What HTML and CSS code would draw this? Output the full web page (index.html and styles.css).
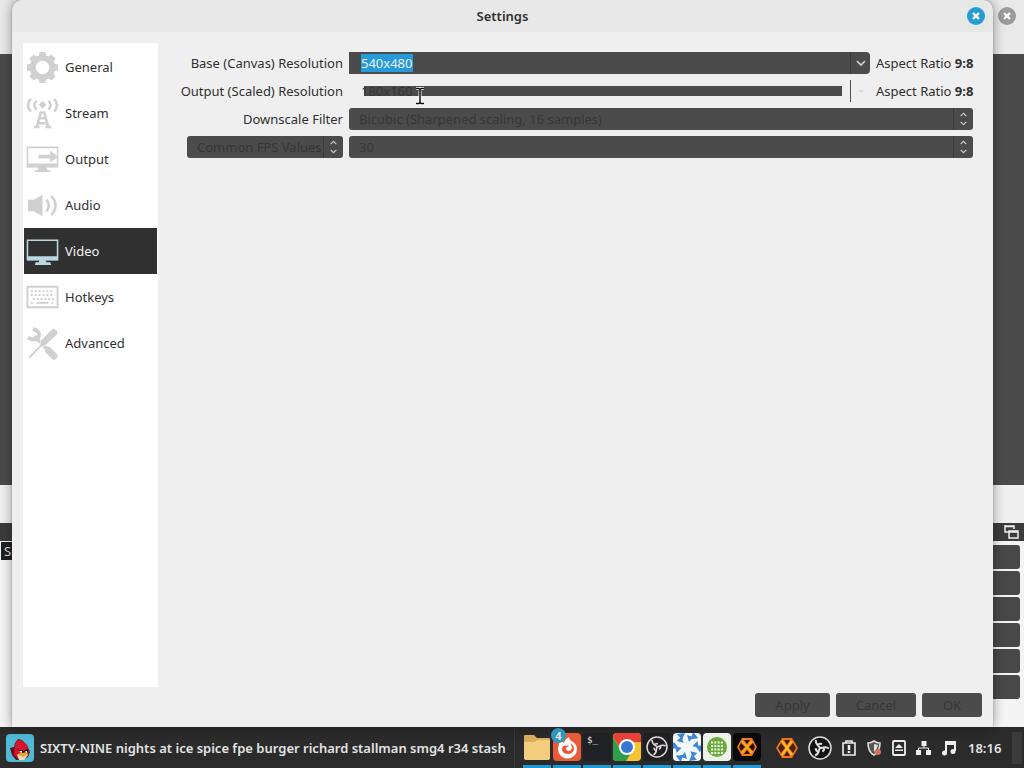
FILE: index.html
```html
<!DOCTYPE html>
<html lang="en">
<head>
<meta charset="utf-8">
<meta name="viewport" content="width=device-width, initial-scale=1">
<title>Settings</title>
<link rel="stylesheet" href="styles.css">
</head>
<body>
<div class="desktop">
  <div class="workspace">
    <div class="app">
      <div class="app-title">
        <button class="close close-idle" aria-label="Close main window"><svg viewBox="0 0 18 18"><path d="M6 6l6 6M12 6l-6 6"/></svg></button>
      </div>
      <div class="app-preview"></div>
      <div class="app-toolbar"></div>
      <div class="dock-title">
        <svg class="float-icon" viewBox="0 0 16 16"><path d="M1 2h9v3M1 1v7h4M5 7h9v7H5z M1 2.5h9M5 8h9"/></svg>
      </div>
      <div class="docks">
        <span class="scene">Scene</span>
        <div class="controls">
          <button aria-label="Start streaming"></button>
          <button aria-label="Start recording"></button>
          <button aria-label="Virtual camera"></button>
          <button aria-label="Studio mode"></button>
          <button aria-label="Settings"></button>
          <button aria-label="Exit"></button>
        </div>
      </div>
    </div>

    <section class="dialog" role="dialog" aria-labelledby="dialog-title">
      <header class="titlebar">
        <h1 id="dialog-title">Settings</h1>
        <button class="close" aria-label="Close"><svg viewBox="0 0 18 18"><path d="M6 6l6 6M12 6l-6 6"/></svg></button>
      </header>
      <div class="dialog-body">
        <nav class="sidebar">
          <a href="#general"><svg viewBox="0 0 34 34"><g fill="#d0d0d0"><path fill-rule="evenodd" d="M17 4a13 13 0 1 0 0 26a13 13 0 1 0 0-26zM17 10a7 7 0 1 1 0 14a7 7 0 1 1 0-14z"/><path id="tooth" d="M13 7l1-6h6l1 6zM13 27l1 6h6l1-6z"/><use href="#tooth" transform="rotate(45 17 17)"/><use href="#tooth" transform="rotate(90 17 17)"/><use href="#tooth" transform="rotate(135 17 17)"/></g></svg>General</a>
          <a href="#stream"><svg viewBox="0 0 34 34"><g fill="none" stroke="#d0d0d0" stroke-width="2.600"><path d="M5 2q-6 6 0 13M29 2q6 6 0 13M11 4q-5 4 0 9M23 4q5 4 0 9"/><path d="M15.500 15L11 31M18.500 15L23 31M14 16h6M13 22h8M11 27h12M8 31h6M20 31h6"/></g><path d="M17 4l4 4-4 4-4-4z" fill="#d0d0d0"/></svg>Stream</a>
          <a href="#output"><svg viewBox="0 0 34 34"><path d="M1.500 4.500h31v20h-31z" fill="none" stroke="#d0d0d0" stroke-width="1.600"/><path d="M1 21h32v4H1zM13 25h8l1 3h3v2H9v-2h3zM13 12h12V8l8 6-8 6v-4H13z" fill="#d0d0d0"/></svg>Output</a>
          <a href="#audio"><svg viewBox="0 0 34 34"><path d="M2 11h6L17 6v22l-9-5H2z" fill="#d0d0d0"/><path d="M21 11q5 6 0 12M26 7q9 10 0 20" fill="none" stroke="#d0d0d0" stroke-width="2.600"/></svg>Audio</a>
          <a href="#video" class="current" aria-current="page"><svg viewBox="0 0 34 34"><path d="M1.500 5.500h31v20h-31z" fill="none" stroke="#b9d7df" stroke-width="1.600"/><path d="M1 22h32v4H1zM14 26h6l1 2h4l1 3H9l1-3h3z" fill="#b9d7df"/></svg>Video</a>
          <a href="#hotkeys"><svg viewBox="0 0 34 34"><path d="M1.500 6h31v21h-31z" fill="none" stroke="#d0d0d0" stroke-width="2"/><path d="M5 10.500h24M5 14.500h24M7 18.500h22M5 22.500h3M26 22.500h3" fill="none" stroke="#d0d0d0" stroke-width="2" stroke-dasharray="2 2"/><path d="M11 22.500h12" stroke="#d0d0d0" stroke-width="2"/></svg>Hotkeys</a>
          <a href="#advanced"><svg viewBox="0 0 34 34"><g fill="none" stroke="#d0d0d0" stroke-linecap="round"><path d="M23 24l6 6" stroke-width="7"/><path d="M10 11l10 10" stroke-width="4"/><path d="M7 2q8 2 6 8-4 5-11 1" stroke-width="4" stroke-linecap="butt"/></g><path d="M28 1l5 3q0 3-2 5L20 19l-5 2L5 32l-3 1 1-3 11-11 1-5L26 3z" fill="#d0d0d0" stroke="#fff" stroke-width=".8"/></svg>Advanced</a>
        </nav>
        <main class="content">
          <form class="form">
            <label for="base">Base (Canvas) Resolution</label>
            <div class="with-ratio">
              <div class="combo">
                <span class="field"><input id="base" class="selected" value="540x480" size="6"></span>
                <button type="button" class="drop" aria-label="Show base resolutions"><svg viewBox="0 0 10 10"><path d="M1 3l4 4 4-4"/></svg></button>
              </div>
              <span>Aspect Ratio <b>9:8</b></span>
            </div>

            <label for="scaled">Output (Scaled) Resolution</label>
            <div class="with-ratio">
              <div class="combo combo-flat">
                <span class="field"><input id="scaled" value="180x160"></span>
                <button type="button" class="drop" aria-label="Show output resolutions"><svg viewBox="0 0 10 10"><path d="M2 4h6L5 7z"/></svg></button>
              </div>
              <span>Aspect Ratio <b>9:8</b></span>
            </div>

            <label for="filter">Downscale Filter</label>
            <div class="picker">
              <select id="filter"><option>Bicubic (Sharpened scaling, 16 samples)</option></select>
              <svg viewBox="0 0 20 22"><path d="M7 8l3-3 3 3M7 14l3 3 3-3"/></svg>
            </div>

            <div class="picker fps-type">
              <select id="fps-type" aria-label="FPS type"><option>Common FPS Values</option></select>
              <svg viewBox="0 0 20 22"><path d="M7 8l3-3 3 3M7 14l3 3 3-3"/></svg>
            </div>
            <div class="picker">
              <select aria-label="FPS value"><option>30</option></select>
              <svg viewBox="0 0 20 22"><path d="M7 8l3-3 3 3M7 14l3 3 3-3"/></svg>
            </div>
          </form>
          <footer class="actions">
            <button class="apply">Apply</button>
            <button class="cancel">Cancel</button>
            <button class="ok">OK</button>
          </footer>
        </main>
      </div>
    </section>
    <svg class="pointer" viewBox="0 0 10 18"><path d="M1 1.500h3l1 1 1-1h3M5 2v14M1 16.500h3l1-1 1 1h3" stroke="#fff" stroke-width="3"/><path d="M1 1.500h3l1 1 1-1h3M5 2v14M1 16.500h3l1-1 1 1h3" stroke="#111" stroke-width="1.500"/></svg>
  </div>

  <footer class="taskbar">
    <button class="menu" aria-label="Menu"><svg viewBox="0 0 30 30"><rect x="1" y="1" width="28" height="28" rx="4" fill="#50b9d5"/><path d="M5 15l4-1 1-4 3-4 4 1 5 5 3 7-2 5-6 3H11l-4-5z" fill="#65131a"/><path d="M10 12q2-6 6-5l6 5 2 7-4 6-6 1-5-4z" fill="#d5142c"/><path d="M12 22q5-4 11 0l-4 5h-5z" fill="#ead9bd"/><path d="M16 18l8 3-6 3-4-2z" fill="#f2a51d"/><path d="M12 16l6 2 5-2v3l-6 1z" fill="#111"/><path d="M14 18h3v2zM19 19l3-1v2z" fill="#fff"/></svg></button>
    <span class="now">SIXTY-NINE nights at ice spice fpe burger richard stallman smg4 r34 stash</span>
    <div class="tasks">
      <button aria-label="Files"><svg viewBox="0 0 28 28"><path d="M1 3q0-1 1-1h9l3 3h12q1 0 1 1v20H1z" fill="#d9ad59"/><path d="M1 9h10l3-2h13v18q0 2-2 2H3q-2 0-2-2z" fill="#f3cc7d"/></svg></button>
      <button aria-label="Firefox, 4 windows"><svg viewBox="0 0 28 28"><rect width="28" height="28" rx="4" fill="#e95b38"/><path d="M8 7l3 3q1-4 5-6 0 3 4 5 4 3 4 7a9.500 9.500 0 0 1-19 0q0-5 3-9z" fill="#fff"/><path d="M10 13q2-1 3 0l3-1q-1 2-3 3 0 3 3 3 3-1 3-4l-2-4q4 2 4 6-1 5-6 5-5 0-6-4 0-2 1-4z" fill="#e95b38"/></svg><span class="badge">4</span></button>
      <button aria-label="Terminal"><svg viewBox="0 0 28 28"><rect width="28" height="28" rx="3" fill="#202124"/><text x="4" y="10" class="prompt">$_</text></svg></button>
      <button aria-label="Chrome"><svg viewBox="0 0 28 28"><rect width="28" height="28" rx="4" fill="#f5c431"/><path d="M0 4q0-4 4-4h20q4 0 4 4v5H14L8 17 0 4z" fill="#e74236"/><path d="M0 4l8 14 10 2-5 8H4q-4 0-4-4z" fill="#2e9e4d"/><circle cx="14" cy="14" r="8" fill="#fff"/><circle cx="14" cy="14" r="6" fill="#3678d2"/></svg></button>
      <button aria-label="OBS Studio"><svg viewBox="0 0 28 28"><rect width="28" height="28" rx="4" fill="#211f22"/><g fill="none" stroke="#ddd" stroke-width="1.500"><circle cx="14" cy="14" r="10"/><path id="blade" d="M14 14c-1-2-5-2-5-7M14 14"/><use href="#blade" transform="rotate(120 14 14)"/><use href="#blade" transform="rotate(240 14 14)"/><path id="curl" d="M11 12q1-2 4-1"/><use href="#curl" transform="rotate(120 14 14)"/><use href="#curl" transform="rotate(240 14 14)"/></g></svg></button>
      <button aria-label="Video editor"><svg viewBox="0 0 28 28"><rect width="28" height="28" rx="4" fill="#f5f9ff"/><g fill="#3e87d7"><path id="fin" d="M4 1l8-1-3 7zM14 2l6 2-4 5z"/><use href="#fin" transform="rotate(60 14 14)"/><use href="#fin" transform="rotate(120 14 14)"/><use href="#fin" transform="rotate(180 14 14)"/><use href="#fin" transform="rotate(240 14 14)"/><use href="#fin" transform="rotate(300 14 14)"/></g></svg></button>
      <button aria-label="Grid app"><svg viewBox="0 0 28 28"><rect width="28" height="28" rx="4" fill="#eff2ea"/><circle cx="14" cy="14" r="10" fill="#68aa3b"/><path d="M8 9.500h12M8 13h12M8 16.500h12M8 20h12" stroke="#f5fff0" stroke-width="2" stroke-dasharray="2 1.300"/></svg></button>
      <button aria-label="Hex app"><svg viewBox="0 0 28 28"><rect width="28" height="28" rx="4" fill="#090909"/><path d="M9 5h10l5 9-5 9H9l-5-9z" fill="#ef791e"/><path d="M11 7h6l-3 4zM11 21h6l-3-4zM6 14l2-4 4 4-4 4zM22 14l-2-4-4 4 4 4z" fill="#2a1207"/><path d="M9 8l10 12M19 8L9 20" stroke="#f7b520" stroke-width="1.600"/></svg></button>
    </div>
    <div class="tray">
      <svg class="big" viewBox="0 0 24 24"><path d="M7 2h10l6 10-6 10H7L1 12z" fill="#ed7420"/><path d="M9 4h6l-3 5zM9 20h6l-3-5zM3 12l3-5 4 5-4 5zM21 12l-3-5-4 5 4 5z" fill="#4a2108"/><path d="M7 5l10 14M17 5L7 19" stroke="#ffc12b" stroke-width="2"/></svg>
      <svg class="big" viewBox="0 0 24 24"><circle cx="12" cy="12" r="11" fill="#111" stroke="#ddd" stroke-width="1.500"/><g fill="none" stroke="#ddd" stroke-width="2"><path id="vane" d="M12 12c-1-3-5-3-4-8M9 9q2-2 5-1"/><use href="#vane" transform="rotate(120 12 12)"/><use href="#vane" transform="rotate(240 12 12)"/></g></svg>
      <svg viewBox="0 0 16 16"><path d="M2 3h12v12H2zM5 3V1h6v2" fill="none" stroke="#eee" stroke-width="1.600"/><path d="M8 5v5M8 11v2" stroke="#eee" stroke-width="2.500"/></svg>
      <svg viewBox="0 0 16 16"><path d="M8 1q3 2 6 2 0 9-6 12Q2 12 2 3q3 0 6-2z" fill="#555" stroke="#ddd" stroke-width="1.600"/><path d="M8 4l4 1q-1 5-4 7z" fill="#ddd"/><circle cx="12" cy="12" r="3" fill="#dc704c"/></svg>
      <svg viewBox="0 0 16 16"><rect x="2" y="1" width="12" height="14" rx="1" fill="none" stroke="#eee" stroke-width="1.800"/><path d="M8 4l4 4H4zM4 9.500h8V11H4z" fill="#eee"/></svg>
      <svg viewBox="0 0 16 16"><path d="M5.500 1h5v5h-5zM0 10h5v5H0zM10 10h5v5h-5z" fill="#eee"/><path d="M8 5v3M2.500 11V8h10v3" fill="none" stroke="#eee"/></svg>
      <svg viewBox="0 0 16 16"><path d="M5 13V2h9v9M5 4h9" fill="none" stroke="#eee" stroke-width="2"/><circle cx="3.500" cy="13" r="2.500" fill="#eee"/><circle cx="12" cy="11.500" r="2.500" fill="#eee"/></svg>
      <time>18:16</time>
      <button class="show-desktop" aria-label="Show desktop"></button>
    </div>
  </footer>
</div>
</body>
</html>
```

FILE: styles.css
```css
* { box-sizing: border-box; }

body {
  margin: 0;
  font: 13px/18px "Noto Sans", "Open Sans", sans-serif;
  color: #303030;
}

button, input, select { font: inherit; color: inherit; border: 0; padding: 0; margin: 0; }
svg { display: block; flex: none; }

.desktop { display: flex; flex-direction: column; height: 100vh; overflow: hidden; }
.workspace { position: relative; flex: 1; min-height: 0; }

.app { display: flex; flex-direction: column; height: 100%; background: #efefef; }
.app-title { display: flex; justify-content: flex-end; height: 54px; padding: 7px 8px; background: #e9e9e9; }
.app-preview { flex: 1; background: #4b4b4b; }
.app-toolbar { height: 38px; }
.dock-title { display: flex; justify-content: flex-end; height: 18px; padding: 1px 4px; background: #3c3c3c; }
.float-icon { width: 16px; height: 16px; fill: none; stroke: #eee; stroke-width: 1.5; }
.docks { display: flex; justify-content: space-between; height: 186px; background: #f4f4f4; }
.scene { height: 18px; margin: 1px; padding: 0 3px; background: #202020; color: #ddd; }
.controls { display: flex; flex-direction: column; gap: 2px; width: 120px; padding: 4px 4px 0 0; }
.controls button { height: 24px; border-radius: 3px; background: #484848; }

.close { width: 18px; height: 18px; border-radius: 50%; background: #269bd9; }
.close svg { width: 18px; height: 18px; stroke: #fff; stroke-width: 2.4; }
.close-idle { background: #9b9b9b; }

.dialog {
  position: absolute;
  inset: 0 31px 0 12px;
  display: flex;
  flex-direction: column;
  border-radius: 10px 10px 0 0;
  background: #efefef;
  box-shadow: 0 0 12px rgba(0, 0, 0, .4), 0 0 1px #555;
}
.titlebar {
  display: grid;
  grid-template-columns: 18px 1fr 18px;
  align-items: center;
  height: 32px;
  padding: 0 8px;
  border-radius: 10px 10px 0 0;
  background: #e8e8e8;
}
.titlebar h1 { grid-column: 2; margin: 0; font-size: 13px; font-weight: 600; text-align: center; }
.dialog-body { display: flex; flex: 1; gap: 22px; min-height: 0; padding: 11px 11px 10px; }

.sidebar { display: flex; flex-direction: column; width: 135px; margin-bottom: 30px; padding: 1px; background: #fff; }
.sidebar a {
  display: flex;
  align-items: center;
  gap: 6px;
  height: 46px;
  padding-left: 2px;
  color: inherit;
  text-decoration: none;
}
.sidebar a svg { width: 33px; height: 33px; }
.sidebar .current { background: #303030; color: #f0f0f0; }

.content { display: flex; flex: 1; flex-direction: column; justify-content: space-between; min-width: 0; }
.form {
  display: grid;
  grid-template-columns: 163px 1fr;
  grid-auto-rows: 22px;
  gap: 6px;
  align-items: center;
  padding: 9px 9px 0 0;
}
.form label { text-align: right; white-space: nowrap; }
.with-ratio { display: flex; align-items: center; gap: 6px; white-space: nowrap; }
.with-ratio > span { width: 97px; }
.with-ratio b { font-weight: 700; }

.combo { display: flex; flex: 1; height: 22px; border-radius: 0 4px 4px 0; background: #4b4b4b; }
.field { display: flex; flex: 1; align-items: center; padding-left: 12px; }
.field input { height: 18px; background: transparent; outline: 0; }
.field .selected { width: 52px; background: #269bd9; color: #eee; }
.drop { display: grid; place-items: center; width: 20px; border-left: 1px solid #3b3b3b; background: transparent; }
.drop svg { width: 10px; height: 10px; fill: none; stroke: #d0d0d0; stroke-width: 1.6; }
.combo-flat { background: transparent; }
.combo-flat .field { padding-right: 8px; }
.combo-flat input { width: 100%; background: linear-gradient(#4b4b4b, #4b4b4b) 3px center / 100% 10px no-repeat; color: #353535; }
.combo-flat .drop { border-color: #4b4b4b; }
.combo-flat .drop svg { fill: #ddd; stroke: none; }

.picker { display: grid; grid-template-columns: 1fr 20px; height: 22px; border-radius: 3px; background: #4b4b4b; color: #363636; }
.picker select { grid-area: 1 / 1 / 2 / 3; width: 100%; height: 22px; padding: 0 22px 0 10px; appearance: none; background: transparent; }
.picker svg { grid-area: 1 / 2; width: 20px; height: 22px; border-left: 1px solid #3b3b3b; fill: none; stroke: #c8c8c8; stroke-width: 1.3; pointer-events: none; }
.fps-type { margin-left: 7px; }

.actions { display: flex; justify-content: flex-end; gap: 6px; }
.actions button { height: 24px; border-radius: 3px; background: #4b4b4b; color: #363636; }
.apply { width: 75px; }
.cancel { width: 80px; }
.ok { width: 60px; }

.pointer { position: absolute; left: 415px; top: 87px; width: 10px; height: 18px; fill: none; }

.taskbar { display: flex; align-items: center; height: 41px; padding: 0 2px 0 5px; background: #2b2b2b; color: #e4e4e4; font-weight: 700; }
.taskbar button { background: transparent; }
.menu svg { width: 30px; height: 30px; }
.now { flex: 1; min-width: 0; padding-left: 5px; overflow: hidden; white-space: nowrap; font-weight: 600; }
.tasks { display: flex; align-self: stretch; gap: 2px; padding-left: 8px; border-left: 1px solid #3a3a3a; }
.tasks button { position: relative; display: flex; align-items: center; width: 28px; padding-top: 2px; border-bottom: 3px solid #1e9bd7; }
.tasks svg { width: 28px; height: 28px; }
.prompt { fill: #eee; font: 9px "DejaVu Sans Mono", monospace; }
.badge { position: absolute; left: -2px; top: 1px; width: 15px; height: 15px; border-radius: 50%; background: #2d97bd; font-size: 11px; line-height: 15px; }
.tray { display: flex; align-items: center; gap: 9px; padding-left: 14px; }
.tray svg { width: 16px; height: 16px; }
.tray .big { width: 24px; height: 24px; }
.tray time { width: 37px; padding-left: 2px; font-weight: 600; }
.tray .show-desktop { width: 10px; height: 32px; background: #3b3b3b; }
```
